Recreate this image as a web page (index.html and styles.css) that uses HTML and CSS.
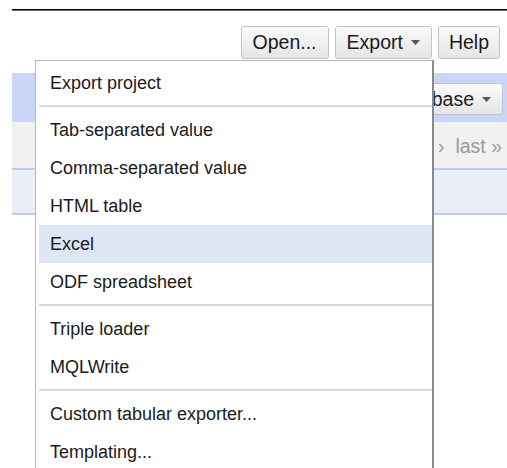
FILE: index.html
```html
<!DOCTYPE html>
<html lang="en">
<head>
<meta charset="utf-8">
<title>Project – Export</title>
<link rel="stylesheet" href="styles.css">
</head>
<body>
<div class="page">
  <div class="rule"></div>

  <div class="toolbar">
    <button class="btn">Open...</button>
    <button class="btn">Export<svg class="caret" width="9" height="5" viewBox="0 0 9 5"><path d="M0 0h9L4.5 5z"/></svg></button>
    <button class="btn btn-narrow">Help</button>
  </div>

  <div class="panel">
    <div class="panel-head">
      <button class="btn btn-small">Freebase<svg class="caret" width="9" height="5" viewBox="0 0 9 5"><path d="M0 0h9L4.5 5z"/></svg></button>
    </div>
    <div class="pager">
      <span>next ›</span><span>last »</span>
    </div>
    <div class="grid-row"></div>
  </div>

  <ul class="menu">
    <li class="item">Export project</li>
    <li class="sep"></li>
    <li class="item">Tab-separated value</li>
    <li class="item">Comma-separated value</li>
    <li class="item">HTML table</li>
    <li class="item active">Excel</li>
    <li class="item">ODF spreadsheet</li>
    <li class="sep"></li>
    <li class="item">Triple loader</li>
    <li class="item">MQLWrite</li>
    <li class="sep"></li>
    <li class="item">Custom tabular exporter...</li>
    <li class="item">Templating...</li>
  </ul>
</div>
</body>
</html>
```

FILE: styles.css
```css
html, body {
  margin: 0;
  padding: 0;
  overflow: hidden;
  background: #fff;
}

body {
  font-family: "Liberation Sans", Arial, sans-serif;
  color: #222;
}

.page {
  position: relative;
  height: 468px;
  padding-left: 12px;
  padding-top: 9px;
  box-sizing: border-box;
}

/* heavy rule along the top of the page */
.rule {
  height: 1px;
  background: #000;
  border-bottom: 1px solid #6a6a6a;
}

.toolbar {
  display: flex;
  justify-content: flex-end;
  gap: 6px;
  padding-right: 7px;
  margin-top: 15px;
}

.btn {
  display: inline-flex;
  align-items: center;
  height: 33px;
  padding: 0 11px;
  font-family: "Liberation Sans", Arial, sans-serif;
  font-size: 19.5px;
  color: #1a1a1a;
  background: linear-gradient(#fbfbfb, #e5e5e5);
  border: 1px solid #c4c4c4;
  border-radius: 3px;
  box-sizing: border-box;
}

.btn-narrow {
  padding: 0 10px;
}

.caret {
  margin-left: 8px;
  fill: #555;
}

.panel {
  margin-top: 14px;
}

.panel-head {
  height: 49px;
  background: #c9d6f7;
  display: flex;
  justify-content: flex-end;
  padding: 10px 4px 0 0;
  box-sizing: border-box;
}

.btn-small {
  height: 32px;
}

.pager {
  height: 48px;
  background: #f1f1f1;
  border-bottom: 2px solid #bccbf3;
  box-sizing: border-box;
  display: flex;
  justify-content: flex-end;
  align-items: center;
  gap: 11px;
  padding: 3px 5px 0 0;
  font-size: 19.5px;
  color: #9a9a9a;
}

.grid-row {
  height: 45px;
  background: #eaeef9;
  border-bottom: 2px solid #bccbf3;
  box-sizing: border-box;
}

/* dropdown opened from the Export button */
.menu {
  position: absolute;
  left: 35px;
  top: 60px;
  width: 399px;
  margin: 0;
  padding: 3px 0 3px 3px;
  list-style: none;
  background: #fff;
  border: 1px solid #b8b8b8;
  border-right: 2px solid #8a8a8a;
  box-sizing: border-box;
}

.item {
  height: 38px;
  line-height: 38px;
  padding-left: 11px;
  font-size: 18px;
  color: #1a1a1a;
  white-space: nowrap;
}

.item.active {
  background: #dde6f5;
}

.sep {
  height: 0;
  margin: 3px 0 4px;
  border-top: 2px solid #d9d9d9;
}
```
